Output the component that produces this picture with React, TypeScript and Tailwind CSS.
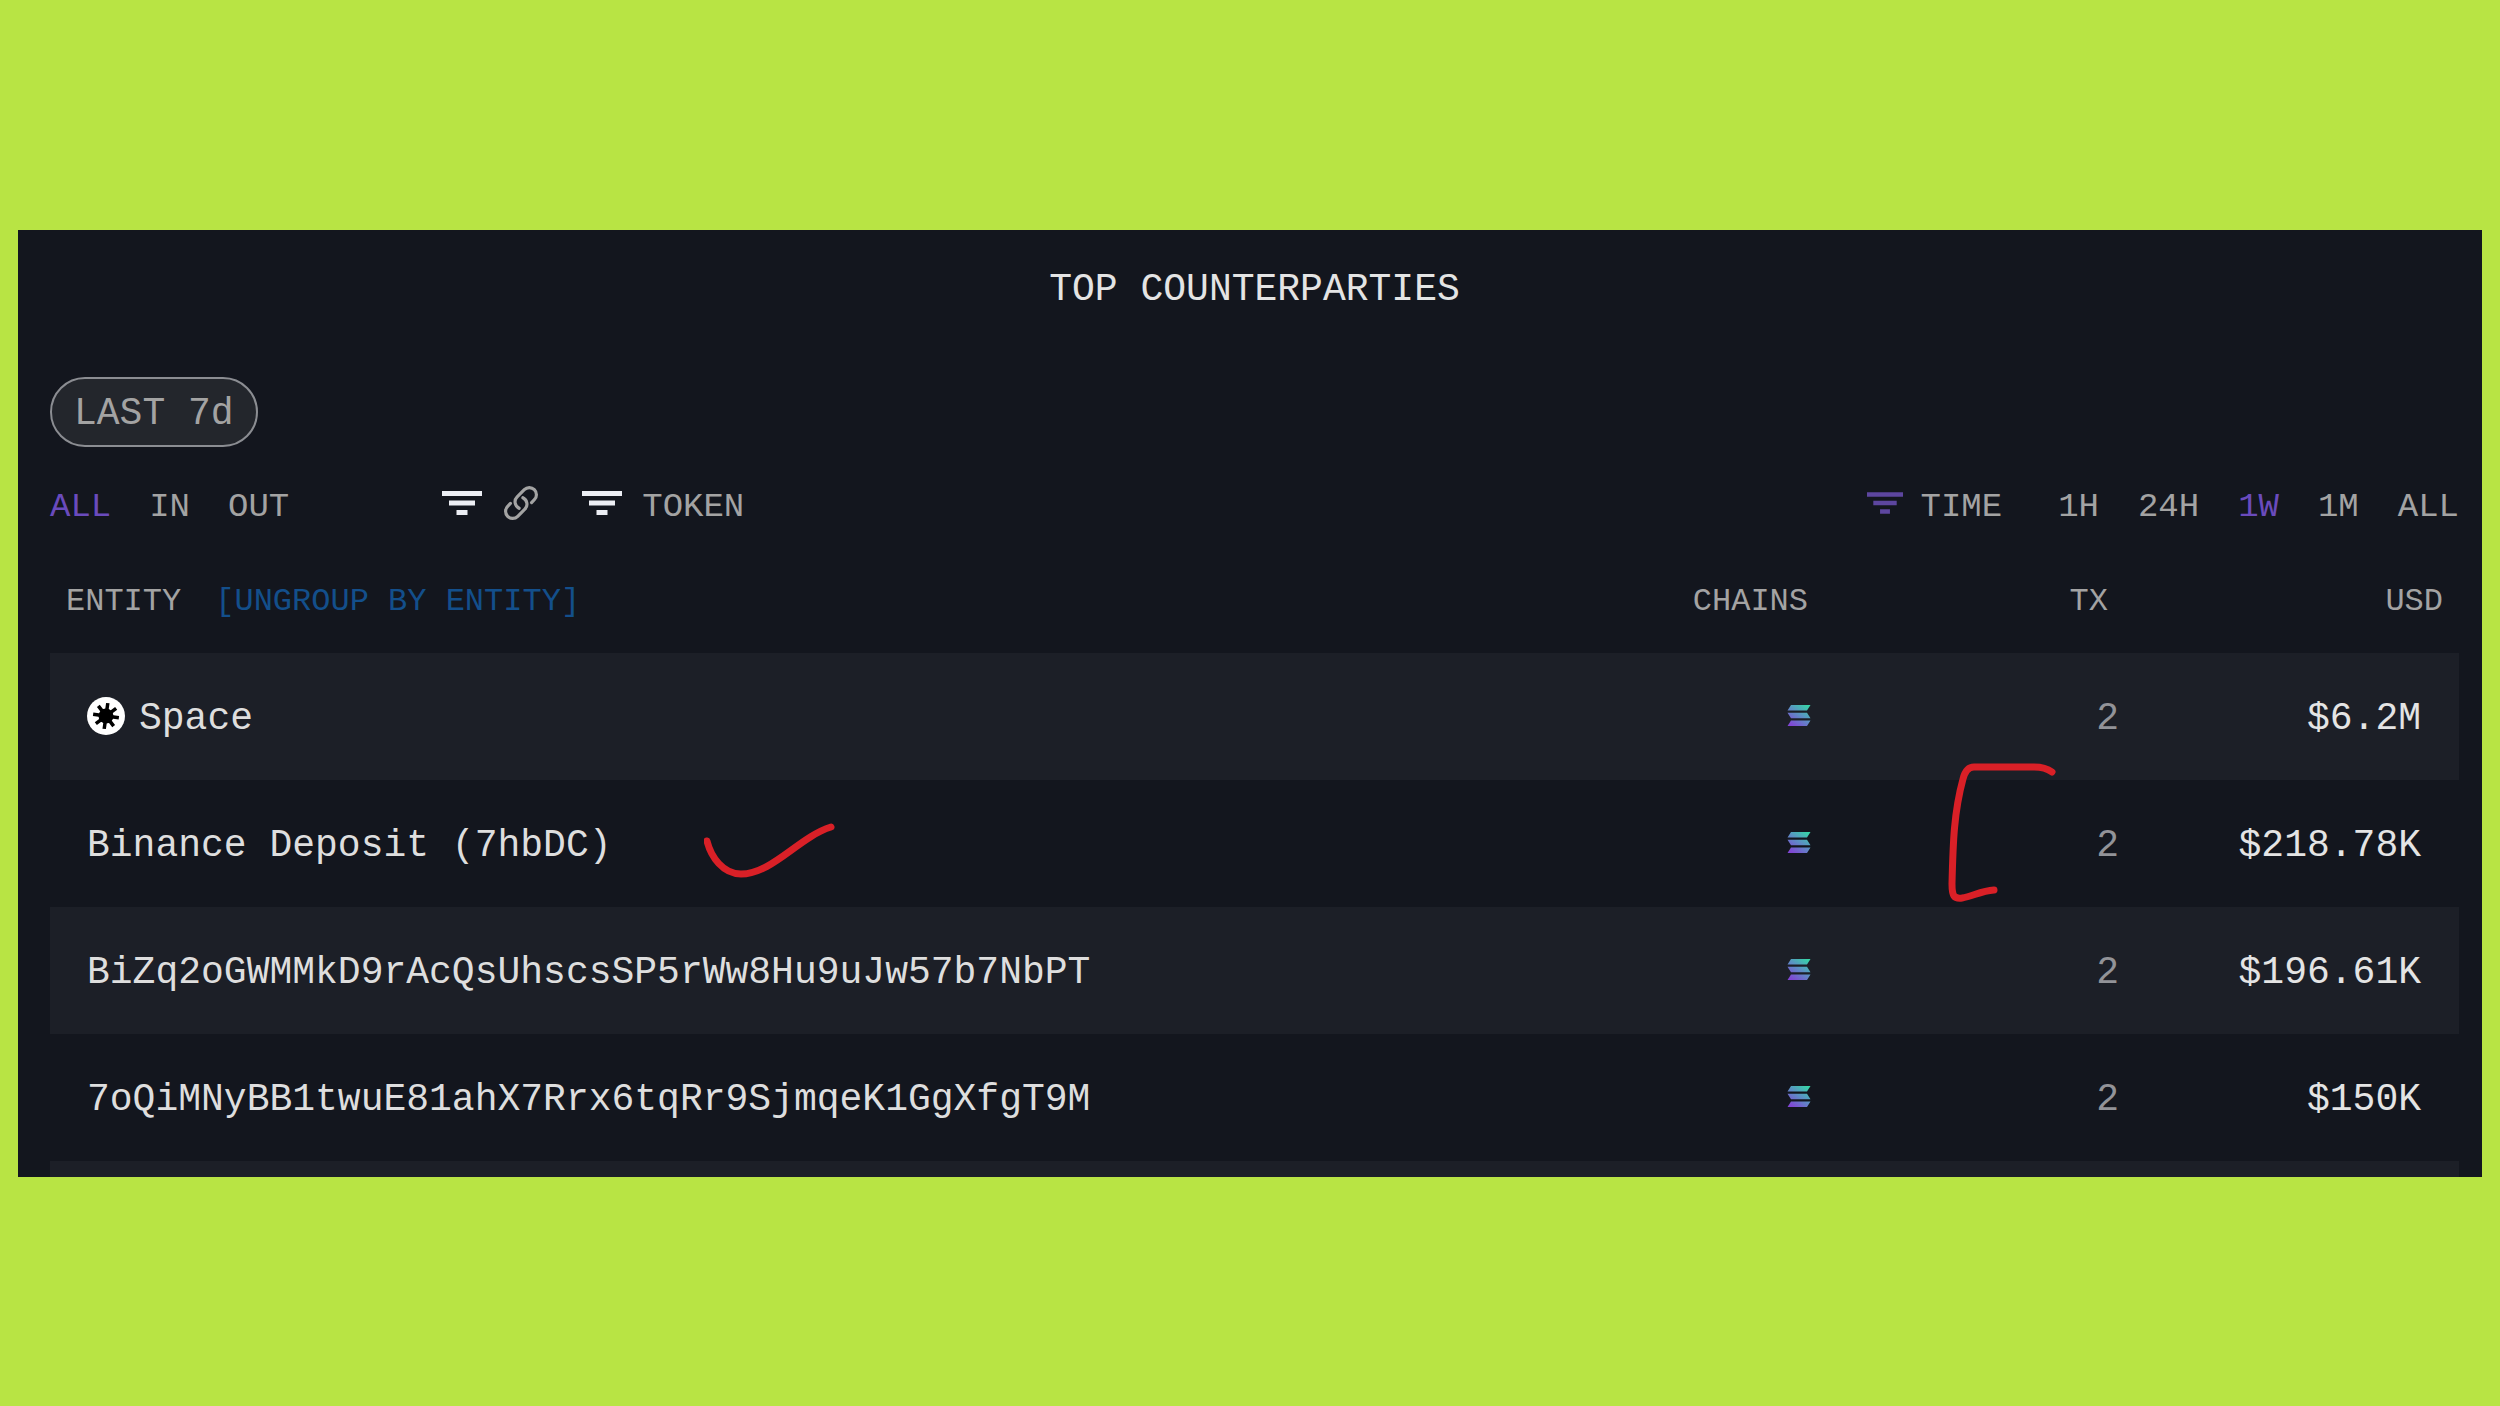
import { useState } from 'react';

type Row = {
  entity: string;
  tx: number;
  usd: string;
  logo?: boolean;
  marked?: boolean;
};

const ROWS: Row[] = [
  { entity: 'Space', tx: 2, usd: '$6.2M', logo: true },
  { entity: 'Binance Deposit (7hbDC)', tx: 2, usd: '$218.78K', marked: true },
  { entity: 'BiZq2oGWMMkD9rAcQsUhscsSP5rWw8Hu9uJw57b7NbPT', tx: 2, usd: '$196.61K' },
  { entity: '7oQiMNyBB1twuE81ahX7Rrx6tqRr9SjmqeK1GgXfgT9M', tx: 2, usd: '$150K' },
];

const DIRECTIONS = ['ALL', 'IN', 'OUT'];
const RANGES = ['1H', '24H', '1W', '1M', 'ALL'];

function FilterIcon({ className }: { className: string }) {
  return (
    <svg aria-hidden="true" className={className} fill="currentColor" viewBox="0 0 40 24">
      <path d="M0 0h40v5H0zM7 9.500h26v5H7zM14.500 19h11v5h-11z" />
    </svg>
  );
}

function LinkIcon() {
  return (
    <svg aria-hidden="true" className="mb-2 size-[38px]" fill="none" viewBox="0 0 24 24">
      <path
        d="M13.19 8.688a4.5 4.5 0 0 1 1.242 7.244l-4.5 4.5a4.5 4.5 0 0 1-6.364-6.364l1.757-1.757m13.35-.622 1.757-1.757a4.5 4.5 0 0 0-6.364-6.364l-4.5 4.5a4.5 4.5 0 0 0 1.242 7.244"
        stroke="currentColor"
        strokeLinecap="round"
        strokeLinejoin="round"
        strokeWidth="2"
      />
    </svg>
  );
}

function SpaceLogo() {
  return (
    <svg aria-hidden="true" className="size-[38px] shrink-0" viewBox="0 0 38 38">
      <circle cx="19" cy="19" r="19" fill="#fff" />
      <g stroke="#000" strokeWidth="3.500" transform="rotate(8 19 19)">
        <path d="M19 6v26M6 19h26M10 10l18 18M28 10 10 28" />
      </g>
      <circle cx="19" cy="19" r="7.500" fill="#000" />
    </svg>
  );
}

function SolanaIcon() {
  return (
    <svg role="img" aria-label="Solana" className="inline-block h-[21px] w-6 align-middle" viewBox="0 0 24 21">
      <defs>
        <linearGradient id="sol" gradientUnits="userSpaceOnUse" x1="21" y1="0" x2="6" y2="21">
          <stop offset="0" stopColor="#35d6a6" />
          <stop offset="0.5" stopColor="#5c8fc4" />
          <stop offset="1" stopColor="#8047d4" />
        </linearGradient>
      </defs>
      <path
        fill="url(#sol)"
        d="M4 0h19.500L20 5.500H.5zM.5 7.700H20l3.500 5.500H4zM4 15.500h19.500L20 21H.5z"
      />
    </svg>
  );
}

function CheckMark() {
  return (
    <svg aria-hidden="true" className="absolute left-[654px] top-[42px] h-[57px] w-[131px]" viewBox="0 0 131 57" fill="none">
      <path
        d="M3 19c4 16 16 33 34 33 31 0 58-37 90-47"
        stroke="#d92027"
        strokeLinecap="round"
        strokeWidth="7"
      />
    </svg>
  );
}

function BracketMark() {
  return (
    <svg aria-hidden="true" className="absolute left-[100px] top-[-18px] h-[142px] w-[108px]" viewBox="0 0 108 142" fill="none">
      <path
        d="M104 10c-4-3-10-5-18-5H26c-6 0-9 4-11 12C6 50 5 80 4 122c0 12 2 15 10 14 11-2 19-7 32-8"
        stroke="#d92027"
        strokeLinecap="round"
        strokeLinejoin="round"
        strokeWidth="7"
      />
    </svg>
  );
}

export default function App() {
  const [direction, setDirection] = useState('ALL');
  const [range, setRange] = useState('1W');
  const [grouped, setGrouped] = useState(true);

  return (
    <div className="flex min-h-screen items-center bg-[#b8e444] px-[18px] font-['Liberation_Mono',monospace]">
      <main className="w-full bg-[#13161e] pl-8 pr-[23px] pt-[34px] text-[#a3a3a3]">
        <h1 className="text-center text-[38px] leading-[52px] text-[#e4e4e4]">TOP COUNTERPARTIES</h1>

        <button
          type="button"
          className="mt-[61px] flex h-[70px] items-center rounded-full border-2 border-[#8b8d92] bg-[#23262c] px-[22px] pt-1 text-[38px] leading-none"
        >
          LAST 7d
        </button>

        <div className="mt-[34px] flex h-[52px] items-center justify-between text-[34px] leading-[52px]">
          <div className="flex items-center">
            <div className="flex gap-[38px]">
              {DIRECTIONS.map((name) => (
                <button
                  key={name}
                  type="button"
                  onClick={() => setDirection(name)}
                  className={direction === name ? 'text-[#6a4bbd]' : ''}
                >
                  {name}
                </button>
              ))}
            </div>
            <button type="button" aria-label="Filter by link" className="ml-[153px] flex items-center gap-5">
              <FilterIcon className="mb-2 h-6 w-10 text-[#eceef4]" />
              <LinkIcon />
            </button>
            <button type="button" className="ml-[42px] flex items-center gap-5">
              <FilterIcon className="mb-2 h-6 w-10 text-[#eceef4]" />
              TOKEN
            </button>
          </div>

          <div className="flex items-center gap-14">
            <button type="button" className="flex items-center gap-[18px]">
              <FilterIcon className="mb-2 h-[22px] w-9 text-[#5d469f]" />
              TIME
            </button>
            <div className="flex gap-[39px]">
              {RANGES.map((name) => (
                <button
                  key={name}
                  type="button"
                  onClick={() => setRange(name)}
                  className={range === name ? 'text-[#6a4bbd]' : ''}
                >
                  {name}
                </button>
              ))}
            </div>
          </div>
        </div>

        <table className="mt-[31px] w-full table-fixed border-collapse">
          <thead>
            <tr className="h-[89px] align-top text-[32px] leading-[52px]">
              <th className="pl-4 pt-3 text-left font-normal">
                ENTITY
                <button type="button" onClick={() => setGrouped(!grouped)} className="ml-[34px] text-[#134f8b]">
                  [{grouped ? 'UNGROUP' : 'GROUP'} BY ENTITY]
                </button>
              </th>
              <th className="w-[260px] pr-10 pt-3 text-right font-normal">CHAINS</th>
              <th className="w-[308px] pr-12 pt-3 text-right font-normal">TX</th>
              <th className="w-[303px] pr-4 pt-3 text-right font-normal">USD</th>
            </tr>
          </thead>
          <tbody className="text-[38px] leading-[52px]">
            {ROWS.map((row) => (
              <tr key={row.entity} className="h-[127px] odd:bg-[#1c1f27]">
                <td className="relative pl-[37px] text-[#dedede]">
                  <div className="flex items-center gap-3.5">
                    {row.logo ? <SpaceLogo /> : null}
                    <span className="pt-1.5">{row.entity}</span>
                  </div>
                  {row.marked ? <CheckMark /> : null}
                </td>
                <td className="pr-[37px] text-right">
                  <SolanaIcon />
                </td>
                <td className="relative pr-[37px] pt-1.5 text-right text-[#929398]">
                  {row.tx}
                  {row.marked ? <BracketMark /> : null}
                </td>
                <td className="pr-[38px] pt-1.5 text-right text-[#e4e4e4]">{row.usd}</td>
              </tr>
            ))}
            <tr className="h-4 bg-[#1c1f27]">
              <td colSpan={4} />
            </tr>
          </tbody>
        </table>
      </main>
    </div>
  );
}
